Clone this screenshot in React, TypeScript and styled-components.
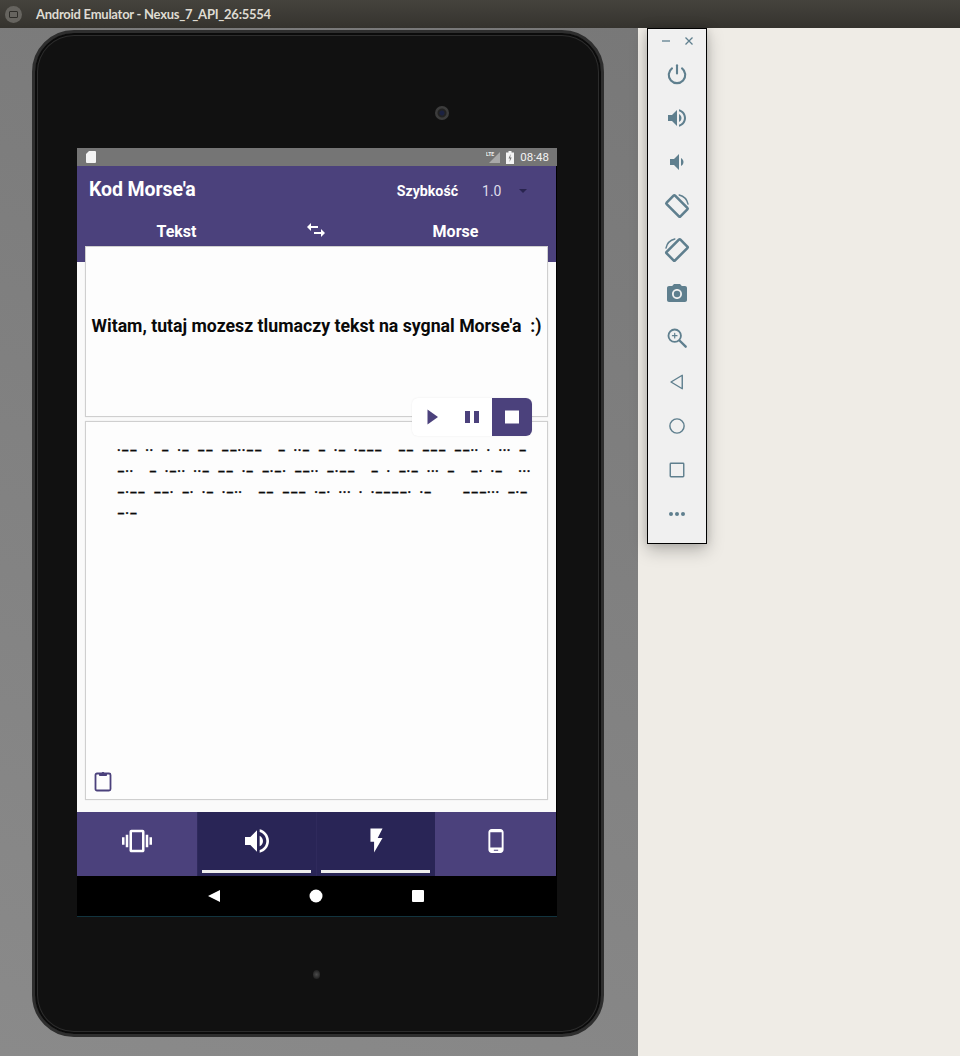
import React from 'react';
import styled, { createGlobalStyle } from 'styled-components';

const Global = createGlobalStyle`
  html, body { margin: 0; padding: 0; background: #efece6; }
  * { box-sizing: border-box; }
`;

const Page = styled.div`
  width: 960px; height: 1056px; overflow: hidden;
  display: flex; flex-direction: column;
  font-family: Roboto, "Liberation Sans", sans-serif;
`;
const TitleBar = styled.header`
  height: 28px; flex: none; display: flex; align-items: center; gap: 14px; padding-left: 5px;
  background: linear-gradient(#45433d, #35332e);
`;
const WinButton = styled.span`
  width: 17px; height: 17px; border-radius: 50%; background: #66645f; display: flex; align-items: center; justify-content: center;
  &::before { content: ""; width: 7px; height: 5px; border: 1px solid #2e2d29; border-radius: 1px; }
`;
const WinTitle = styled.h1`
  margin: 0; font: 700 13px Lato, "Noto Sans", sans-serif; color: #dfdbd2; letter-spacing: -.26px; white-space: nowrap;
`;
const Desk = styled.div`flex: 1; display: flex; min-height: 0;`;
const Stage = styled.div`
  width: 638px; flex: none; padding: 2px 0 0 32px;
  background: linear-gradient(200deg, #787878 0%, #8a8a8a 100%);
`;
const Device = styled.div`
  position: relative; width: 572px; height: 1007px; padding: 118px 46px 0 45px;
  border-radius: 42px; background: #111;
  border: 3px solid #2e2e2e; box-shadow: inset 0 0 0 2px #0b0b0b, inset 0 0 0 3px #2c2c2c;
  display: flex; flex-direction: column; align-items: stretch;
`;
const Camera = styled.span`
  position: absolute; left: 400px; top: 73px; width: 14px; height: 14px; border-radius: 50%;
  background: radial-gradient(circle, #1b2140 0 2px, #222 3px 4px, #3c3c3c 5px 7px);
`;
const Speaker = styled.span`
  align-self: center; margin: 53px 0 0 -2px; width: 7px; height: 9px; border-radius: 50%;
  background: radial-gradient(circle, #4a4a4a, #1a1a1a 90%);
`;
const Screen = styled.div`
  width: 480px; height: 769px; flex: none; display: flex; flex-direction: column; background: #000;
  margin-left: -3px; margin-top: -3px; border-bottom: 1px solid #12343f;
`;
const StatusBar = styled.div`
  height: 18px; flex: none; background: #757575; display: flex; align-items: center; padding: 0 8px 0 9px; color: #f2f2f2;
  font-size: 11.5px; gap: 4px;
`;
const Spacer = styled.div`flex: 1;`;
const AppFrame = styled.div`
  width: 479px; flex: 1; min-height: 0; display: flex; flex-direction: column; background: #fafafa; position: relative;
`;
const AppHead = styled.div`height: 96px; flex: none; margin-bottom: -16px; background: #4b417c; color: #fff;`;
const HeadRow = styled.div`height: 49px; display: flex; align-items: center; padding: 0 0 2px 12px;`;
const AppName = styled.div`font-size: 19.5px; font-weight: 700; letter-spacing: -.1px; flex: 1;`;
const SpeedLabel = styled.div`font-size: 14.2px; font-weight: 700; margin-right: 24px; margin-top: 2px;`;
const SpeedValue = styled.div`font-size: 14px; color: #dedcea; margin-right: 17.5px; margin-top: 2px;`;
const Caret = styled.span`
  width: 0; height: 0; border: 4px solid transparent; border-top: 4px solid #29244f; border-bottom: 0; margin-right: 29px; margin-top: 2px;
`;
const TabRow = styled.div`
  height: 31px; display: grid; grid-template-columns: 199px 80px 199px; align-items: center; justify-items: center;
  font-size: 16px; font-weight: 700; padding-top: 1px;
`;
const SwapBtn = styled.div`display: flex; margin-top: -2px;`;
const Cards = styled.div`
  position: relative; flex: 1; min-height: 0; padding: 0 8px 12px; display: flex; flex-direction: column; gap: 4px;
`;
const Card = styled.div<{ $h: number }>`
  height: ${p => p.$h}px; flex: none; border: 1px solid #cfcfcf; background: #fdfdfd; box-shadow: 0 0 1px rgba(0,0,0,.12);
  position: relative;
`;
const InputCard = styled(Card)`
  display: flex; align-items: center; justify-content: center;
  font-size: 17.7px; font-weight: 700; color: #0a0a0a;
  background: #fdfdfd; padding-bottom: 11px; white-space: pre;
`;
const OutputCard = styled(Card)`
  padding: 18.5px 0 0 31px;
`;
const MorseLine = styled.div`
  height: 21px; line-height: 21px; font-size: 12px; font-weight: 700; color: #0a0a0a; white-space: pre;
  font-family: Roboto, sans-serif; -webkit-text-stroke: .3px #0a0a0a; letter-spacing: .6px; word-spacing: 4.1px;
`;
const Transport = styled.div`
  position: absolute; left: 335px; top: 152px; width: 120px; height: 38px; border-radius: 6px; overflow: hidden;
  display: flex; background: #fff; box-shadow: 0 0 2px rgba(0,0,0,.08);
`;
const TransportBtn = styled.div<{ $on?: boolean }>`
  width: 40px; height: 38px; display: flex; align-items: center; justify-content: center;
  background: ${p => (p.$on ? '#4b417c' : 'transparent')};
  color: ${p => (p.$on ? '#fff' : '#4b417c')};
`;
const ClipBtn = styled.div`
  position: absolute; left: 5px; bottom: 6px; display: flex; color: #4b417c;
`;
const ModeBar = styled.div`
  height: 64px; flex: none; display: grid; grid-template-columns: 120px 119px 119px 121px; background: #4b417c;
`;
const Mode = styled.div<{ $on?: boolean }>`
  position: relative; display: flex; align-items: center; justify-content: center; color: #fff; padding-bottom: 7px;
  background: ${p => (p.$on ? '#292556' : 'transparent')};
  ${p => p.$on ? `border-left: 1px solid #2f2a5c; &::after { content: ""; position: absolute; left: 4px; right: 5px; bottom: 3px; height: 3px; background: #eeeeee; }` : ''}
`;
const NavBar = styled.div`
  height: 40px; flex: none; background: #000; display: grid; grid-template-columns: 144px 102px 102px; justify-content: start; align-items: center;
  justify-items: end; color: #fff;
`;
const Tool = styled.aside`
  margin-left: 9px; width: 60px; height: 516px; background: #f0f0f0; border: 1px solid #000;
  box-shadow: 0 6px 16px rgba(0,0,0,.25), 0 0 8px rgba(0,0,0,.12);
  display: flex; flex-direction: column; align-items: center; color: #5f7f8e;
`;
const ToolTop = styled.div`
  height: 24px; flex: none; width: 100%; display: flex; justify-content: center; align-items: center; gap: 13px; margin-bottom: -1px;
`;
const ToolBtn = styled.div`
  height: 44px; width: 100%; flex: none; display: flex; align-items: center; justify-content: center;
`;

const I = ({ d, s = 24, vb = '0 0 24 24', children }: { d?: string; s?: number; vb?: string; children?: React.ReactNode }) => (
  <svg width={s} height={s} viewBox={vb} fill="currentColor">
    {d && <path d={d} />}
    {children}
  </svg>
);

const P = {
  volUp: 'M3 9v6h4l5 5V4L7 9H3zm13.5 3c0-1.77-1.02-3.29-2.5-4.03v8.05c1.48-.73 2.5-2.25 2.5-4.02zM14 3.23v2.06c2.89.86 5 3.54 5 6.71s-2.11 5.85-5 6.71v2.06c4.01-.91 7-4.49 7-8.77s-2.99-7.86-7-8.77z',
  volDown: 'M18.5 12c0-1.77-1.02-3.29-2.5-4.03v8.05c1.48-.72 2.5-2.24 2.5-4.02zM5 9v6h4l5 5V4L9 9H5z',
  vibrate: 'M0 15h2V9H0v6zm3 2h2V7H3v10zm19-8v6h2V9h-2zm-3 8h2V7h-2v10zM16.5 3h-9C6.67 3 6 3.67 6 4.5v15c0 .83.67 1.5 1.5 1.5h9c.83 0 1.5-.67 1.5-1.5v-15c0-.83-.67-1.5-1.5-1.5zM16 19H8V5h8v14z',
  flash: 'M7 2v11h3v9l7-12h-4l4-8z',
  phone: 'M16 1H8C6.34 1 5 2.34 5 4v16c0 1.66 1.34 3 3 3h8c1.66 0 3-1.34 3-3V4c0-1.66-1.34-3-3-3zm-2 20h-4v-1h4v1zm3.25-3H6.75V4h10.5v14z',
  swap: 'M7 5L3 9l4 4v-3h7V8H7V5zM17 11v3h-7v2h7v3l4-4-4-4z',
  camera: 'M9 2L7.17 4H4c-1.1 0-2 .9-2 2v12c0 1.1.9 2 2 2h16c1.1 0 2-.9 2-2V6c0-1.1-.9-2-2-2h-3.17L15 2H9zm3 15c-2.76 0-5-2.24-5-5s2.24-5 5-5 5 2.24 5 5-2.24 5-5 5z',
};

const Stroke = ({ s = 22, w = 2, children }: { s?: number; w?: number; children: React.ReactNode }) => (
  <svg width={s} height={s} viewBox="0 0 24 24" fill="none" stroke="currentColor" strokeWidth={w} strokeLinecap="round" strokeLinejoin="round">
    {children}
  </svg>
);

const RotateA = () => (
  <Stroke s={26} w={2.4}>
    <rect x="6.5" y="3" width="11" height="18" rx="1" transform="rotate(-45 12 12)" />
    <path d="M14 1.8a11 11 0 0 1 8.2 8.4" strokeWidth="1.3" />
  </Stroke>
);
const RotateB = () => (
  <Stroke s={26} w={2.4}>
    <rect x="6.5" y="3" width="11" height="18" rx="1" transform="rotate(45 12 12)" />
    <path d="M10 1.8a11 11 0 0 0-8.2 8.4" strokeWidth="1.3" />
  </Stroke>
);

const morse = [
  '·–– ·· – ·– –– ––··––  – ··– – ·– ·–––  –– ––– ––·· · ··· –',
  '–··  – ·–·· ··– –– ·– –·–· ––·· –·––  – · –·– ··· –  –· ·–  ···',
  '–·–– ––· –· ·– ·–··  –– ––– ·–· ··· · ·––––· ·–    –––··· –·–',
  '–·–',
];

export default function App() {
  return (
    <Page>
      <Global />
      <TitleBar>
        <WinButton />
        <WinTitle>Android Emulator - Nexus_7_API_26:5554</WinTitle>
      </TitleBar>
      <Desk>
        <Stage>
          <Device>
            <Camera />
            <Screen>
              <StatusBar>
                <svg width="10" height="12" viewBox="0 0 10 12" fill="#f4f4f4"><path d="M3 0h6a1 1 0 0 1 1 1v10a1 1 0 0 1-1 1H1a1 1 0 0 1-1-1V3z" /></svg>
                <Spacer />
                <svg width="14" height="12" viewBox="0 0 14 12"><path d="M14 1v11H3z" fill="#a9a9a9" /><text x="0" y="5" fontSize="5" fontWeight="700" fill="#eee" fontFamily="Roboto">LTE</text></svg>
                <svg width="8" height="13" viewBox="0 0 8 13" style={{ marginLeft: 2, marginRight: 2 }}><path d="M2.5 0h3v1.5H8V13H0V1.5h2.5z" fill="#f4f4f4" /><path d="M4.6 3L2.5 7.5H4L3.5 11l2.2-4.6H4.2z" fill="#757575" /></svg>
                <span>08:48</span>
              </StatusBar>
              <AppFrame>
                <AppHead>
                  <HeadRow>
                    <AppName>Kod Morse'a</AppName>
                    <SpeedLabel>Szybkość</SpeedLabel>
                    <SpeedValue>1.0</SpeedValue>
                    <Caret />
                  </HeadRow>
                  <TabRow>
                    <span>Tekst</span>
                    <SwapBtn><I d={P.swap} s={24} /></SwapBtn>
                    <span>Morse</span>
                  </TabRow>
                </AppHead>
                <Cards>
                  <InputCard $h={171}>Witam, tutaj mozesz tlumaczy tekst na sygnal Morse'a  :)</InputCard>
                  <OutputCard $h={379}>
                    {morse.map((l, i) => <MorseLine key={i}>{l}</MorseLine>)}
                    <ClipBtn>
                      <svg width="24" height="24" viewBox="0 0 24 24" fill="none" stroke="currentColor" strokeWidth="1.8" strokeLinejoin="round">
                        <rect x="4.5" y="4.5" width="15" height="17" rx="1.5" />
                        <path d="M8.5 6.5V4.5H10.5a1.6 1.6 0 0 1 3 0h2v2z" fill="currentColor" strokeWidth="1" />
                      </svg>
                    </ClipBtn>
                  </OutputCard>
                  <Transport>
                    <TransportBtn><I d="M7.5 4.5v15L18 12z" s={24} /></TransportBtn>
                    <TransportBtn><I d="M5 6h5v12H5zM14 6h5v12h-5z" s={24} /></TransportBtn>
                    <TransportBtn $on><I d="M5 5.5h14v13H5z" s={24} /></TransportBtn>
                  </Transport>
                </Cards>
                <ModeBar>
                  <Mode><I d={P.vibrate} s={30} /></Mode>
                  <Mode $on><I d={P.volUp} s={32} /></Mode>
                  <Mode $on><I d={P.flash} s={29} /></Mode>
                  <Mode><I d={P.phone} s={26} /></Mode>
                </ModeBar>
              </AppFrame>
              <NavBar>
                <svg width="14" height="14" viewBox="0 0 14 14" fill="#fff"><path d="M13 1v12L1 7z" /></svg>
                <svg width="14" height="14" viewBox="0 0 14 14" fill="#fff"><circle cx="7" cy="7" r="6.5" /></svg>
                <svg width="14" height="14" viewBox="0 0 14 14" fill="#fff"><rect x="1" y="1" width="12" height="12" rx="1" /></svg>
              </NavBar>
            </Screen>
            <Speaker />
          </Device>
        </Stage>
        <Tool>
          <ToolTop>
            <svg width="10" height="10" viewBox="0 0 10 10" stroke="currentColor" strokeWidth="1.3"><path d="M1 5h8" /></svg>
            <svg width="10" height="10" viewBox="0 0 10 10" stroke="currentColor" strokeWidth="1.3"><path d="M1.5 1.5l7 7M8.5 1.5l-7 7" /></svg>
          </ToolTop>
          <ToolBtn><Stroke s={22} w={2.3}><path d="M12 2.5v9" /><path d="M6.5 5.8a9 9 0 1 0 11 0" /></Stroke></ToolBtn>
          <ToolBtn><I d={P.volUp} s={24} /></ToolBtn>
          <ToolBtn><I d={P.volDown} s={24} /></ToolBtn>
          <ToolBtn><RotateA /></ToolBtn>
          <ToolBtn><RotateB /></ToolBtn>
          <ToolBtn>
            <I s={24}><path d={P.camera} /><circle cx="12" cy="12" r="3.2" /></I>
          </ToolBtn>
          <ToolBtn><Stroke s={22} w={2}><circle cx="9.5" cy="9.5" r="6.8" /><path d="M15 15l6.5 6.5" strokeWidth="2.6" /><path d="M9.5 7v5M7 9.5h5" strokeWidth="1.3" /></Stroke></ToolBtn>
          <ToolBtn><Stroke s={18} w={1.9}><path d="M19 3v18L4 12z" /></Stroke></ToolBtn>
          <ToolBtn><Stroke s={18} w={1.9}><circle cx="12" cy="12" r="9.5" /></Stroke></ToolBtn>
          <ToolBtn><Stroke s={18} w={1.9}><rect x="3" y="3" width="18" height="18" rx="1" /></Stroke></ToolBtn>
          <ToolBtn><svg width="18" height="6" viewBox="0 0 18 6" fill="currentColor"><circle cx="3" cy="3" r="2" /><circle cx="9" cy="3" r="2" /><circle cx="15" cy="3" r="2" /></svg></ToolBtn>
        </Tool>
      </Desk>
    </Page>
  );
}
